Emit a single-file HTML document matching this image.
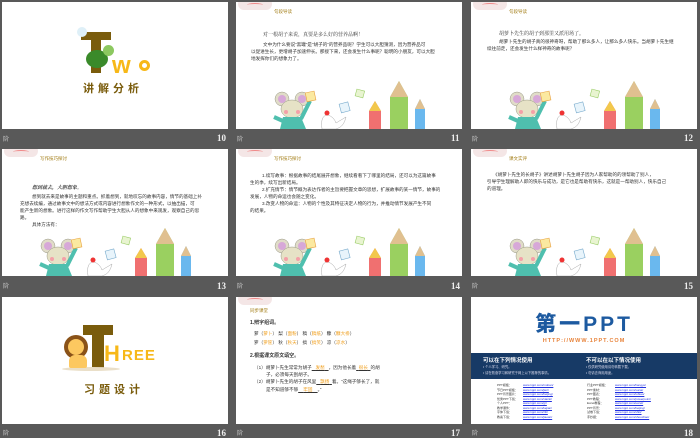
<!DOCTYPE html>
<html><head><meta charset="utf-8">
<style>
*{margin:0;padding:0;box-sizing:border-box}
body{width:700px;height:438px;background:#595959;position:relative;overflow:hidden;font-family:"Liberation Sans","Noto Sans CJK SC",sans-serif}
.s{position:absolute;width:226px;height:127px;background:#fff;overflow:hidden}
.lb{position:absolute;color:#ddd;font-size:6px;font-family:"Liberation Serif","Noto Serif CJK SC",serif}
.num{position:absolute;color:#eee;font-size:9px;font-weight:bold;font-family:"Liberation Serif",serif}
.t{position:absolute;font-size:4.6px;color:#333;line-height:9px;white-space:nowrap}
.hd{position:absolute;left:38px;top:7px;font-size:4.5px;color:#a07a10}
.cl{position:absolute;left:2px;top:-4px;width:34px;height:12px;border-radius:6px;background:#f4e6e6}
.cl:after{content:"";position:absolute;left:9px;top:5px;width:16px;height:3px;border-top:1.5px solid #f08a8a;border-radius:50%}
.deco{position:absolute;left:0;bottom:0;width:226px;height:50px}
</style></head><body>

<svg width="0" height="0" style="position:absolute">
<defs>
<g id="dec">
 <circle cx="46" cy="20" r="7" fill="#e0dcc8" stroke="#998" stroke-width=".5"/>
 <circle cx="46" cy="20" r="4" fill="#d7a8d8"/>
 <circle cx="66" cy="20" r="7" fill="#e0dcc8" stroke="#998" stroke-width=".5"/>
 <circle cx="66" cy="20" r="4" fill="#d7a8d8"/>
 <ellipse cx="56" cy="30" rx="11" ry="9" fill="#e6e2c6" stroke="#998" stroke-width=".5"/>
 <circle cx="50" cy="33" r="2" fill="#f4a0a8"/><circle cx="62" cy="33" r="2" fill="#f4a0a8"/>
 <path d="M44 50 L47 38 L65 38 L70 50 Z" fill="#4fbfae"/>
 <path d="M65 40 L74 22" stroke="#4fbfae" stroke-width="4"/>
 <path d="M47 42 L38 38" stroke="#4fbfae" stroke-width="4"/>
 <rect x="70" y="13" width="9" height="9" fill="#fbe9a0" stroke="#e8a040" stroke-width=".6" transform="rotate(-12 74 17)"/>
 <path d="M86 50 Q84 36 92 36 Q98 38 100 44 L110 38 Q108 48 100 50 Z" fill="#fff" stroke="#aaa" stroke-width=".5"/>
 <circle cx="91" cy="34" r="2.5" fill="#e33"/>
 <rect x="104" y="24" width="9" height="9" fill="#e8f4fb" stroke="#7ac" stroke-width=".6" transform="rotate(-15 108 28)"/>
 <rect x="120" y="11" width="8" height="7" fill="#e8f4d0" stroke="#9c6" stroke-width=".6" transform="rotate(15 124 14)"/>
 <path d="M133 50 L133 32 L139 22 L145 32 L145 50 Z" fill="#f07070"/><path d="M133 32 L139 22 L145 32 Z" fill="#f2c84c"/>
 <path d="M154 50 L154 18 L163 2 L172 18 L172 50 Z" fill="#9ad060"/><path d="M154 18 L163 2 L172 18 Z" fill="#e0c090"/>
 <path d="M179 50 L179 30 L184 20 L189 30 L189 50 Z" fill="#6ab8ee"/><path d="M179 30 L184 20 L189 30 Z" fill="#e0c090"/>
</g>
</defs>
</svg>

<div class="s" style="left:2px;top:2px">
 <div style="position:absolute;left:79px;top:30px;width:30px;height:8px;background:#7a5c0c"></div>
 <div style="position:absolute;left:89px;top:30px;width:10px;height:41px;background:#7a5c0c"></div>
 <div style="position:absolute;left:75px;top:25px;width:10px;height:10px;border-radius:50%;background:#dff0f8"></div>
 <div style="position:absolute;left:84px;top:48px;width:22px;height:18px;border-radius:50%;background:#3a8a2a"></div>
 <div style="position:absolute;left:101px;top:43px;width:11px;height:11px;border-radius:50%;background:#8cc860"></div>
 <div style="position:absolute;left:110px;top:54px;font-size:24px;font-weight:bold;color:#f7b818;line-height:20px">w</div>
 <div style="position:absolute;left:137px;top:58px;width:11px;height:11px;border-radius:50%;border:3px solid #f7b818"></div>
 <div style="position:absolute;left:81px;top:78px;font-size:11px;font-weight:bold;color:#7a5c0c;letter-spacing:4px">讲解分析</div>
</div>
<div class="lb" style="left:3px;top:134px">阶</div><div class="num" style="left:217px;top:133px">10</div>

<div class="s" style="left:236px;top:2px">
 <div class="cl"></div><div class="hd">句段导读</div>
 <div class="t" style="left:27px;top:29px;font-family:'Liberation Serif','Noto Serif CJK SC',serif;font-size:5px">对一根胡子来说，真要是多么好的营养品啊！</div>
 <div class="t" style="left:27px;top:38px">文中为什么要说“黑罐”是“胡子的”的营养品呢？学生可以大胆猜测，因为营养品可</div>
 <div class="t" style="left:15px;top:45px">以促进生长，更增胡子加速伸长。那接下来，还会发生什么事呢？聪明的小朋友，可以大胆</div>
 <div class="t" style="left:15px;top:52px">地发挥你们的想象力了。</div>
 <svg class="deco" viewBox="0 0 226 50"><use href="#dec"/></svg>
</div>
<div class="lb" style="left:237px;top:134px">阶</div><div class="num" style="left:451px;top:133px">11</div>

<div class="s" style="left:471px;top:2px">
 <div class="cl"></div><div class="hd">句段导读</div>
 <div class="t" style="left:28px;top:28px;font-family:'Liberation Serif','Noto Serif CJK SC',serif;font-size:5px">胡萝卜先生的胡子到那里又派用场了。</div>
 <div class="t" style="left:28px;top:35px">胡萝卜先生的胡子真的很神奇呀，帮助了那么多人，让那么多人快乐。当胡萝卜先生继</div>
 <div class="t" style="left:16px;top:42px">续往前走，还会发生什么样神奇的故事呢？</div>
 <svg class="deco" viewBox="0 0 226 50"><use href="#dec"/></svg>
</div>
<div class="lb" style="left:472px;top:134px">阶</div><div class="num" style="left:684px;top:133px">12</div>

<div class="s" style="left:2px;top:149px">
 <div class="cl"></div><div class="hd">写作技巧探讨</div>
 <div class="t" style="left:30px;top:35px;font-family:'Liberation Serif','Noto Serif CJK SC',serif;font-size:5px;font-weight:bold;font-style:italic">想到就去，大胆想象。</div>
 <div class="t" style="left:30px;top:43px">想到就去来是故事的主题和重点。抓着想到，就地叹忘的故事内容，情节的基础上补</div>
 <div class="t" style="left:18px;top:50px">充想去续编，通过故事文中的想法方式或内容进行想象作文的一种形式，以抽出描，可</div>
 <div class="t" style="left:18px;top:57px">能产生新的想象。进行这样的作文写作帮助学生大胆从人的想象中来观发，观察自己的思</div>
 <div class="t" style="left:18px;top:64px">路。</div>
 <div class="t" style="left:30px;top:71px">具体方法有：</div>
 <svg class="deco" viewBox="0 0 226 50"><use href="#dec"/></svg>
</div>
<div class="lb" style="left:3px;top:281px">阶</div><div class="num" style="left:217px;top:281px">13</div>

<div class="s" style="left:236px;top:149px">
 <div class="cl"></div><div class="hd">写作技巧探讨</div>
 <div class="t" style="left:26px;top:22px">1.续写故事：根据故事的结尾展开想象，继续看看下了哪里的结局，还可以为这篇故事</div>
 <div class="t" style="left:14px;top:29px">生的季，续写出新结局。</div>
 <div class="t" style="left:26px;top:36px">2.扩充情节：情节概为表达作者的主旨要把握文章的思想，扩展故事的某一情节，故事的</div>
 <div class="t" style="left:14px;top:43px">发展，人物的命运也会随之变化。</div>
 <div class="t" style="left:26px;top:50px">3.改变人物的命运：人物的个性及其特征决定人物的行为，并推动情节发展产生不同</div>
 <div class="t" style="left:14px;top:57px">的结果。</div>
 <svg class="deco" viewBox="0 0 226 50"><use href="#dec"/></svg>
</div>
<div class="lb" style="left:237px;top:281px">阶</div><div class="num" style="left:451px;top:281px">14</div>

<div class="s" style="left:471px;top:149px">
 <div class="cl"></div><div class="hd">课文实评</div>
 <div class="t" style="left:22px;top:21px">《胡萝卜先生的长胡子》讲述胡萝卜先生胡子因为人家帮助的的领帮助了别人，</div>
 <div class="t" style="left:16px;top:28px">引导学生理解助人即的快乐与成功，是它也是帮助有快乐，这就是一帮助别人，快乐自己</div>
 <div class="t" style="left:16px;top:35px">的道理。</div>
 <svg class="deco" viewBox="0 0 226 50"><use href="#dec"/></svg>
</div>
<div class="lb" style="left:472px;top:281px">阶</div><div class="num" style="left:684px;top:281px">15</div>

<div class="s" style="left:2px;top:297px">
 <div style="position:absolute;left:81px;top:28px;width:30px;height:10px;background:#7a5c0c"></div>
 <div style="position:absolute;left:90px;top:28px;width:12px;height:44px;background:#7a5c0c"></div>
 <div style="position:absolute;left:60px;top:70px;width:58px;height:4px;border-radius:50%;background:#eadfc8"></div>
 <div style="position:absolute;left:62px;top:38px;width:24px;height:24px;border-radius:50%;background:#8a5218"></div>
 <div style="position:absolute;left:66px;top:42px;width:16px;height:16px;border-radius:50%;background:#fcc860"></div>
 <div style="position:absolute;left:67px;top:58px;width:18px;height:13px;border-radius:6px 6px 2px 2px;background:#fcc860"></div>
 <div style="position:absolute;left:102px;top:46px;font-size:22px;font-weight:bold;color:#f7b818;line-height:22px">H</div>
 <div style="position:absolute;left:120px;top:51px;font-size:15px;font-weight:bold;color:#f7b818;line-height:16px;letter-spacing:1px">REE</div>
 <div style="position:absolute;left:82px;top:84px;font-size:11px;font-weight:bold;color:#7a5c0c;letter-spacing:4px">习题设计</div>
</div>
<div class="lb" style="left:3px;top:428px">阶</div><div class="num" style="left:217px;top:428px">16</div>

<div class="s" style="left:236px;top:297px">
 <div class="cl"></div><div class="hd" style="left:14px;top:11px">同步课堂</div>
 <div class="t" style="left:14px;top:22px;font-size:5px;font-weight:bold">1.辨字组词。</div>
 <div class="t" style="left:18px;top:32px">萝（<span style="color:#f0a020">萝卜</span>） 梨（<span style="color:#f0a020">面粉</span>） 稿（<span style="color:#f0a020">稿纸</span>） 糠（<span style="color:#f0a020">糠大褂</span>）</div>
 <div class="t" style="left:18px;top:41px">箩（<span style="color:#f0a020">箩筐</span>） 秋（<span style="color:#f0a020">秋天</span>） 搞（<span style="color:#f0a020">搞笑</span>） 凉（<span style="color:#f0a020">凉水</span>）</div>
 <div class="t" style="left:14px;top:55px;font-size:5px;font-weight:bold">2.根据课文原文填空。</div>
 <div class="t" style="left:18px;top:66px">（1）胡萝卜先生常常为胡子<u>&nbsp;&nbsp;&nbsp;<span style="color:#f0a020">发愁</span>&nbsp;&nbsp;&nbsp;</u>，因为他长着<u>&nbsp;&nbsp;<span style="color:#f0a020">很长</span>&nbsp;&nbsp;</u>的胡</div>
 <div class="t" style="left:30px;top:73px">子，必须每天刮胡子。</div>
 <div class="t" style="left:18px;top:80px">（2）胡萝卜先生的胡子在风里<u>&nbsp;&nbsp;&nbsp;<span style="color:#f0a020">飘扬</span>&nbsp;&nbsp;</u>着。“这绳子够长了，就</div>
 <div class="t" style="left:30px;top:88px">是不知道够不够<u>&nbsp;&nbsp;&nbsp;&nbsp;<span style="color:#f0a020">牢固</span>&nbsp;&nbsp;&nbsp;&nbsp;</u>。”</div>
</div>
<div class="lb" style="left:237px;top:428px">阶</div><div class="num" style="left:451px;top:428px">17</div>

<div class="s" style="left:471px;top:297px">
 <div style="position:absolute;left:0;top:16px;width:226px;text-align:center;font-size:21px;line-height:24px;font-weight:900;color:#1d5aa0;letter-spacing:3px;font-family:'Liberation Sans','Noto Sans CJK SC',sans-serif">第一PPT</div>
 <div style="position:absolute;left:0;top:41px;width:226px;text-align:center;font-size:5.5px;color:#e8843c;letter-spacing:1px;font-weight:bold">HTTP://WWW.1PPT.COM</div>
 <div style="position:absolute;left:0;top:56px;width:226px;height:26px;background:#173a66"></div>
 <div style="position:absolute;left:12px;top:59px;font-size:5.5px;color:#fff;font-weight:bold">可以在下列情况使用</div>
 <div style="position:absolute;left:115px;top:59px;font-size:5.5px;color:#fff;font-weight:bold">不可以在以下情况使用</div>
 <div style="position:absolute;left:12px;top:67px;font-size:3.3px;color:#dde;line-height:6px">• 个人学习、研究。<br>• 请在勤奋学习和研究于网上以下推荐的事情。</div>
 <div style="position:absolute;left:115px;top:67px;font-size:3.3px;color:#dde;line-height:6px">• 仅供研究使用请勿转载下载。<br>• 勿请去商用用途。</div>
 <div style="position:absolute;left:26px;top:86px;font-size:3px;color:#333;line-height:4.5px">PPT模板：<br>节日PPT模板：<br>PPT背景图片：<br>优秀PPT下载：<br>个人PPT：<br>教学课件：<br>字体下载：<br>教案下载：</div>
 <div style="position:absolute;left:52px;top:86px;font-size:3px;color:#2030e0;line-height:4.5px;text-decoration:underline">www.1ppt.com/moban/<br>www.1ppt.com/jieri/<br>www.1ppt.com/beijing/<br>www.1ppt.com/xiazai/<br>www.1ppt.com/gr/<br>www.1ppt.com/kejian/<br>www.1ppt.com/ziti/<br>www.1ppt.com/jiaoan/</div>
 <div style="position:absolute;left:116px;top:86px;font-size:3px;color:#333;line-height:4.5px">行业PPT模板：<br>PPT素材：<br>PPT图表：<br>PPT教程：<br>Excel教程：<br>PPT背景：<br>试卷下载：<br>手抄报：</div>
 <div style="position:absolute;left:144px;top:86px;font-size:3px;color:#2030e0;line-height:4.5px;text-decoration:underline">www.1ppt.com/hangye/<br>www.1ppt.com/sucai/<br>www.1ppt.com/tubiao/<br>www.1ppt.com/powerpoint/<br>www.1ppt.com/excel/<br>www.1ppt.com/beijing/<br>www.1ppt.com/shiti/<br>www.1ppt.com/shouchao/</div>
</div>
<div class="lb" style="left:472px;top:428px">阶</div><div class="num" style="left:684px;top:428px">18</div>

</body></html>
